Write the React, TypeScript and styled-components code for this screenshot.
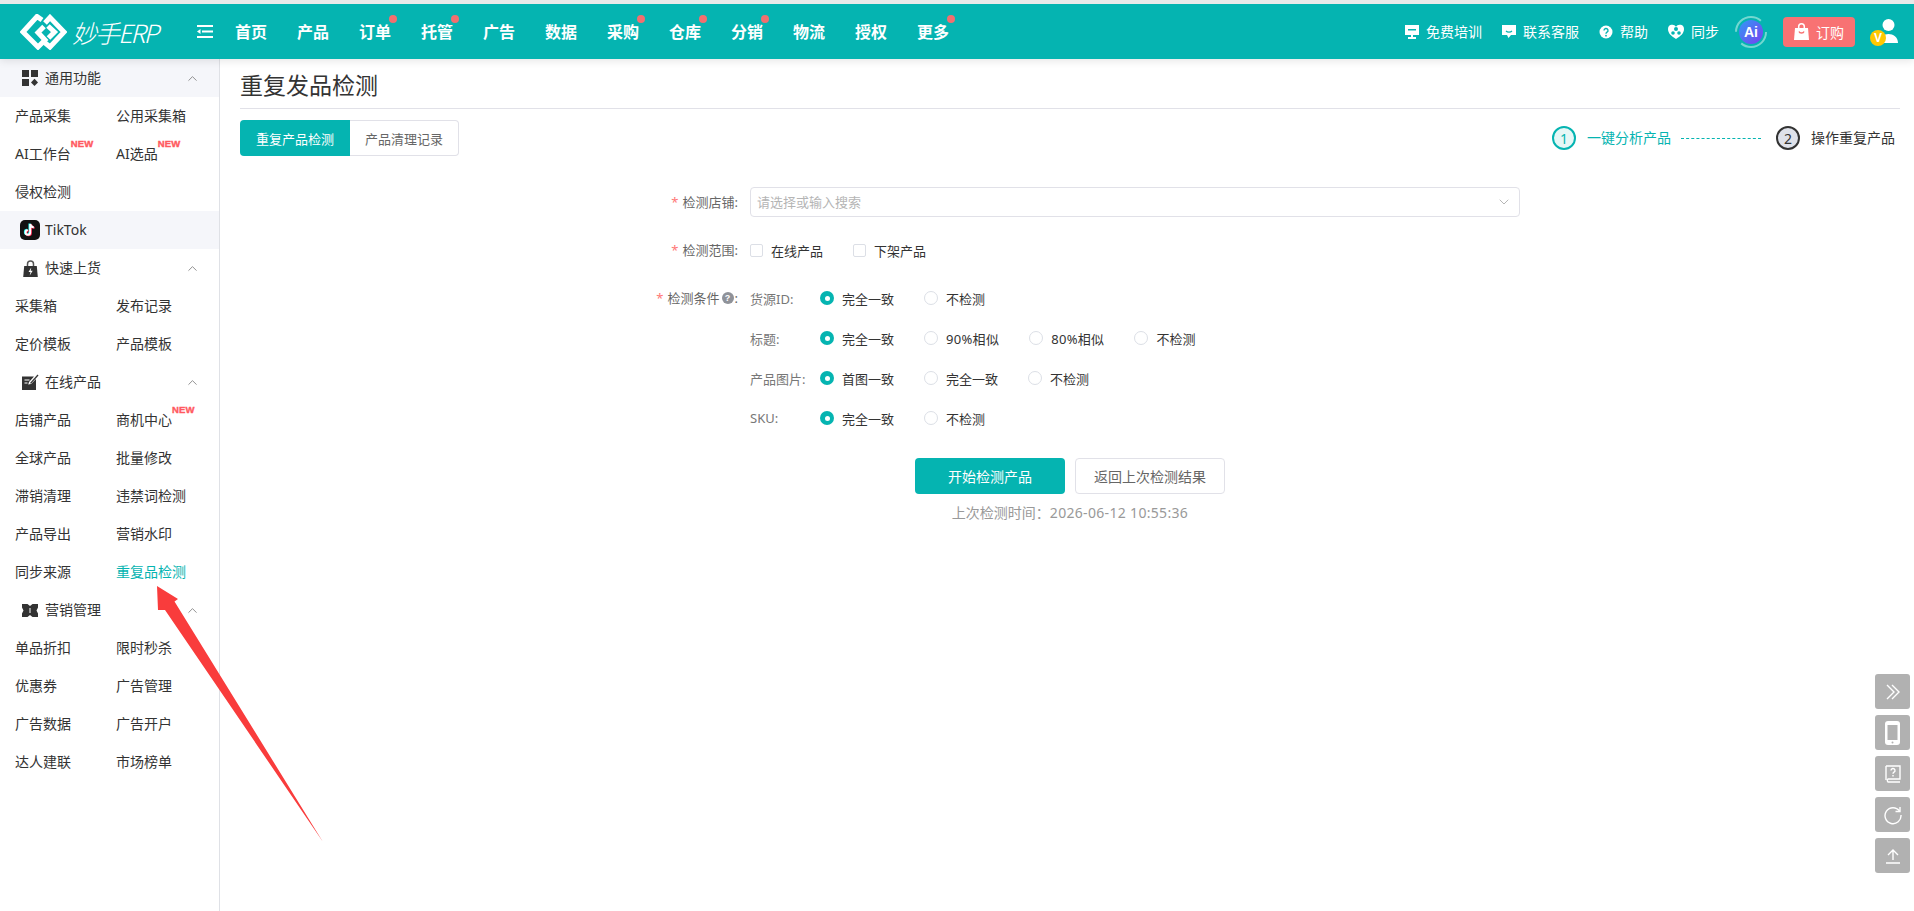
import React from "react";
import styled, { createGlobalStyle } from "styled-components";
import { ChevronDown, ChevronUp } from "lucide-react";

const TEAL = "#05b4b1";

const Global = createGlobalStyle`
  html, body { margin: 0; padding: 0; background: #fff; }
  body { font-family: "Noto Sans", "Noto Sans CJK SC", sans-serif; color: #333; overflow: hidden; }
  * { box-sizing: border-box; }
`;

const Page = styled.div`
  position: relative;
  width: 1914px;
  height: 911px;
  overflow: hidden;
  display: flex;
  flex-direction: column;
  border-top: 4px solid #e9e9e9;
`;

const Header = styled.header`
  position: relative;
  z-index: 2;
  height: 55px;
  flex: none;
  display: flex;
  align-items: center;
  background: ${TEAL};
  color: #fff;
  padding: 0 16px 0 20px;
  box-shadow: 0 2px 8px rgba(0, 0, 0, 0.1);
`;

const Logo = styled.div`
  display: flex;
  align-items: center;
  gap: 5px;
  width: 177px;
  flex: none;
`;

const LogoText = styled.span`
  font-family: "Noto Sans CJK SC", "Noto Sans", sans-serif;
  font-size: 25px;
  font-weight: 300;
  font-style: italic;
  letter-spacing: -2px;
  line-height: 34px;
  white-space: nowrap;
`;

const MenuIcon = styled.svg`
  width: 16px;
  height: 13px;
  flex: none;
  margin-right: 22px;
`;

const Nav = styled.nav`
  display: flex;
  gap: 30px;
`;

const NavItem = styled.span<{ $dot?: boolean }>`
  position: relative;
  font-size: 16px;
  line-height: 24px;
  font-weight: 700;
  width: 32px;
  white-space: nowrap;
  &::after {
    content: "";
    display: ${(p) => (p.$dot ? "block" : "none")};
    position: absolute;
    right: -6px;
    top: -5px;
    width: 8px;
    height: 8px;
    border-radius: 50%;
    background: #f26f6f;
  }
`;

const HeaderRight = styled.div`
  margin-left: auto;
  display: flex;
  align-items: center;
`;

const Tools = styled.div`
  display: flex;
  align-items: center;
  gap: 20px;
  margin-right: 16px;
`;

const Tool = styled.span`
  display: flex;
  align-items: center;
  gap: 7px;
  font-size: 14px;
  line-height: 20px;
  white-space: nowrap;
`;

const AiBall = styled.div`
  position: relative;
  width: 32px;
  height: 32px;
  margin-right: 16px;
  flex: none;
`;

const AiLabel = styled.span`
  position: absolute;
  inset: 0;
  display: flex;
  align-items: center;
  justify-content: center;
  font-family: "Liberation Sans", sans-serif;
  font-size: 14px;
  font-weight: 700;
  color: #fff;
`;

const BuyButton = styled.div`
  width: 72px;
  height: 30px;
  display: flex;
  align-items: center;
  gap: 7px;
  padding-left: 11px;
  margin-right: 15px;
  background: #f87273;
  border-radius: 4px;
  font-size: 14px;
`;

const UserBox = styled.div`
  position: relative;
  width: 28px;
  height: 26px;
  flex: none;
`;

const VBadge = styled.span`
  position: absolute;
  left: 0;
  bottom: -1px;
  width: 16px;
  height: 16px;
  border-radius: 50%;
  background: #ffc800;
  color: #fff;
  font: 700 12px/16px "Liberation Sans", sans-serif;
  text-align: center;
`;

const Body = styled.div`
  flex: 1;
  display: flex;
  min-height: 0;
`;

const Sidebar = styled.aside`
  width: 220px;
  flex: none;
  border-right: 1px solid #dfe1e6;
`;

const SectionHead = styled.div<{ $tint?: boolean }>`
  height: 38px;
  display: flex;
  align-items: center;
  padding: 0 19px 0 20px;
  background: ${(p) => (p.$tint ? "#f5f6fa" : "#fff")};
  font-size: 14px;
  color: #333;
`;

const SectionIcon = styled.span`
  width: 20px;
  height: 20px;
  flex: none;
  display: flex;
  align-items: center;
  justify-content: center;
  margin-right: 5px;
`;

const SectionTitle = styled.span`
  flex: 1;
  line-height: 20px;
`;

const ItemGrid = styled.div`
  display: grid;
  grid-template-columns: 101px 101px;
  grid-auto-rows: 38px;
  padding-left: 15px;
`;

const Item = styled.div<{ $active?: boolean }>`
  display: flex;
  align-items: center;
  font-size: 14px;
  color: ${(p) => (p.$active ? TEAL : "#333")};
  white-space: nowrap;
`;

const ItemLabel = styled.span`
  position: relative;
  line-height: 20px;
`;

const NewTag = styled.span`
  position: absolute;
  left: 100%;
  top: -5px;
  font: 700 9.5px/10px "Liberation Sans", sans-serif;
  letter-spacing: 0.2px;
  color: #ff5a5f;
  -webkit-text-stroke: 0.4px #ff5a5f;
`;

const Main = styled.main`
  flex: 1;
  min-width: 0;
  padding: 0 14px 0 20px;
`;

const Title = styled.h1`
  margin: 0;
  height: 50px;
  display: flex;
  align-items: center;
  font-size: 23px;
  font-weight: 400;
  color: #333;
  border-bottom: 1px solid #e1e1e8;
`;

const TabRow = styled.div`
  margin-top: 11px;
  display: flex;
  justify-content: space-between;
  align-items: center;
`;

const Tabs = styled.div`
  display: flex;
  height: 36px;
`;

const Tab = styled.div<{ $active?: boolean }>`
  width: ${(p) => (p.$active ? "110px" : "109px")};
  display: flex;
  align-items: center;
  justify-content: center;
  font-size: 13px;
  background: ${(p) => (p.$active ? TEAL : "#fff")};
  color: ${(p) => (p.$active ? "#fff" : "#666")};
  border: ${(p) => (p.$active ? "none" : "1px solid #e1e1e8")};
  border-left: none;
  border-radius: ${(p) => (p.$active ? "4px 0 0 4px" : "0 4px 4px 0")};
`;

const Steps = styled.div`
  display: flex;
  align-items: center;
  padding-right: 5px;
  font-size: 14px;
`;

const StepCircle = styled.span<{ $current?: boolean }>`
  width: 24px;
  height: 24px;
  border-radius: 50%;
  display: flex;
  align-items: center;
  justify-content: center;
  font-size: 14px;
  border: 2px solid ${(p) => (p.$current ? TEAL : "#333")};
  background: ${(p) => (p.$current ? "#e6f7f6" : "#dfe2ea")};
  color: ${(p) => (p.$current ? TEAL : "#333")};
  margin-right: 11px;
`;

const StepText = styled.span<{ $current?: boolean }>`
  color: ${(p) => (p.$current ? TEAL : "#333")};
  line-height: 20px;
`;

const StepLine = styled.span`
  width: 80px;
  margin: 0 15px 0 10px;
  border-top: 1px dashed ${TEAL};
`;

const Form = styled.div`
  width: 900px;
  margin: 31px auto 0;
  font-size: 13px;
`;

const FormRow = styled.div<{ $top?: number }>`
  display: grid;
  grid-template-columns: 118px 1fr;
  column-gap: 12px;
  margin-top: ${(p) => p.$top ?? 0}px;
`;

const Label = styled.label`
  display: flex;
  justify-content: flex-end;
  align-items: center;
  height: 20px;
  line-height: 20px;
  color: #666;
  white-space: nowrap;
`;

const SelectLabel = styled(Label)`
  height: 30px;
`;

const Star = styled.span`
  color: #f77;
  margin-right: 4px;
`;

const HelpDot = styled.span`
  width: 12px;
  height: 12px;
  margin-left: 2px;
  margin-right: 1px;
  border-radius: 50%;
  background: #8f9299;
  color: #fff;
  font: 700 9px/12px "Liberation Sans", sans-serif;
  text-align: center;
`;

const Select = styled.div`
  height: 30px;
  display: flex;
  align-items: center;
  justify-content: space-between;
  padding: 0 7px 1px 6px;
  border: 1px solid #e1e1e8;
  border-radius: 4px;
  color: #b5b5b5;
`;

const ChoiceLine = styled.div`
  display: flex;
  align-items: center;
  height: 20px;
`;

const CheckItem = styled.span`
  display: flex;
  align-items: center;
  gap: 8px;
  margin-right: 30px;
  color: #333;
`;

const CheckBox = styled.span`
  width: 13px;
  height: 13px;
  border: 1px solid #dcdfe6;
  border-radius: 2px;
`;

const ConditionStack = styled.div`
  display: flex;
  flex-direction: column;
  gap: 20px;
`;

const RowKey = styled.span`
  width: 70px;
  flex: none;
  color: #777;
  white-space: nowrap;
`;

const RadioItem = styled.span<{ $spaced?: boolean }>`
  display: flex;
  align-items: center;
  gap: 8px;
  margin-right: 30px;
  color: #333;
  white-space: nowrap;
  letter-spacing: ${(p) => (p.$spaced ? "0.3px" : "0")};
`;

const RadioMark = styled.span<{ $on?: boolean }>`
  width: 14px;
  height: 14px;
  border-radius: 50%;
  display: flex;
  align-items: center;
  justify-content: center;
  background: ${(p) => (p.$on ? TEAL : "#fff")};
  border: ${(p) => (p.$on ? "none" : "1px solid #dcdfe6")};
  &::after {
    content: "";
    display: ${(p) => (p.$on ? "block" : "none")};
    width: 5px;
    height: 5px;
    border-radius: 50%;
    background: #fff;
  }
`;

const ActionRow = styled.div`
  margin-top: 30px;
  display: flex;
  justify-content: center;
  gap: 10px;
`;

const ActionButton = styled.div<{ $primary?: boolean }>`
  width: 150px;
  height: 36px;
  display: flex;
  align-items: center;
  justify-content: center;
  font-size: 14px;
  border-radius: 4px;
  background: ${(p) => (p.$primary ? TEAL : "#fff")};
  color: ${(p) => (p.$primary ? "#fff" : "#666")};
  border: ${(p) => (p.$primary ? "none" : "1px solid #e1e1e8")};
`;

const LastCheck = styled.div`
  margin-top: 8px;
  text-align: center;
  font-family: "Noto Sans CJK SC", "Noto Sans", sans-serif;
  font-size: 14px;
  line-height: 20px;
  color: #999;
`;

const LastCheckTime = styled.span`
  font-family: "Noto Sans", sans-serif;
  letter-spacing: 0.32px;
`;

const FloatBar = styled.div`
  position: absolute;
  right: 4px;
  top: 670px;
  display: flex;
  flex-direction: column;
  gap: 6px;
  z-index: 3;
`;

const FloatBtn = styled.div`
  width: 35px;
  height: 35px;
  border-radius: 3px;
  background: #b1b1b1;
  display: flex;
  align-items: center;
  justify-content: center;
`;

const ArrowMark = styled.svg`
  position: absolute;
  left: 150px;
  top: 578px;
  width: 180px;
  height: 270px;
  z-index: 4;
  pointer-events: none;
`;

const LogoMark = () => (
  <svg width="47" height="36" viewBox="0 0 47 36" fill="none" stroke="#fff" strokeWidth="5" strokeLinejoin="miter">
    <path d="M22 6 L17 2.5 L3 18 L18 33 L25 26 L18 18.5 L24 12.5" />
    <path d="M25 9 L30 3.5 L44 18 L30 33 L24 28" />
    <path d="M28 12 L34.5 18 L28.5 24" />
  </svg>
);

const GridIcon = () => (
  <svg width="16" height="16" viewBox="0 0 16 16" fill="#333">
    <rect x="0" y="0" width="7" height="7" />
    <rect x="9" y="0" width="7" height="7" />
    <rect x="0" y="9" width="7" height="7" />
    <path d="M12.5 8.8 L16 12.5 L12.5 16 L9 12.5 Z" />
  </svg>
);

const TikTokIcon = () => (
  <svg width="20" height="20" viewBox="0 0 20 20" style={{ marginLeft: -1 }}>
    <rect width="20" height="20" rx="5" fill="#111" />
    <path d="M10.2 4v8.4a2.3 2.3 0 1 1-2.3-2.3M10.2 4c.3 2 1.6 3.2 3.6 3.4" transform="translate(-0.8 -0.5)" fill="none" stroke="#25f4ee" strokeWidth="1.9" />
    <path d="M10.2 4v8.4a2.3 2.3 0 1 1-2.3-2.3M10.2 4c.3 2 1.6 3.2 3.6 3.4" transform="translate(0.8 0.5)" fill="none" stroke="#fe2c55" strokeWidth="1.9" />
    <path d="M10.2 4v8.4a2.3 2.3 0 1 1-2.3-2.3M10.2 4c.3 2 1.6 3.2 3.6 3.4" fill="none" stroke="#fff" strokeWidth="1.9" />
  </svg>
);

const BoltBagIcon = () => (
  <svg width="15" height="17" viewBox="0 0 15 17">
    <path d="M4.5 6V4a3 3 0 0 1 6 0v2" fill="none" stroke="#555" strokeWidth="1.5" />
    <path d="M1.2 6h12.6l1 11H.2z" fill="#333" />
    <path d="M8.3 7.5 5.5 12h2l-.8 3.4 3-4.6h-2z" fill="#fff" />
  </svg>
);

const NoteIcon = () => (
  <svg width="17" height="16" viewBox="0 0 17 16">
    <path d="M0 2.5h12L7 8l-.8 2.6L9 10l5-5v11H0z" fill="#333" />
    <path d="M8 9 15.5 .5l1 1L9 9.8z" fill="#333" />
    <path d="M2.5 6h5M2.5 9h3" stroke="#fff" strokeWidth="1.2" />
  </svg>
);

const TicketIcon = () => (
  <svg width="16" height="13" viewBox="0 0 16 13">
    <path d="M0 0h5.5L8 2 10.5 0H16v3.5L14.500 6.500 16 9.500V13h-5.500L8 11 5.500 13H0V9.500L1.500 6.500 0 3.500z" fill="#333" />
    <path d="M8 4v5" stroke="#fff" strokeWidth="1" />
  </svg>
);

const BoardIcon = () => (
  <svg width="14" height="16" viewBox="0 0 14 16" fill="#fff">
    <path d="M0 1h14v10H8v2h3v2H3v-2h3v-2H0z" />
    <path d="M3 5h8v1.500H3z" fill={TEAL} />
  </svg>
);

const ChatIcon = () => (
  <svg width="14" height="15" viewBox="0 0 14 15" fill="#fff">
    <path d="M0 1h14v10H9l-2.500 3L5 11H0z" />
    <path d="M4 7c1.500 1.400 4.500 1.400 6 0" stroke={TEAL} strokeWidth="1.2" fill="none" />
  </svg>
);

const HelpIcon = () => (
  <svg width="14" height="14" viewBox="0 0 14 14">
    <circle cx="7" cy="7" r="6.5" fill="#fff" />
    <path d="M5 5.500a2 2 0 1 1 3 1.700c-.7.400-1 .800-1 1.500" stroke={TEAL} strokeWidth="1.4" fill="none" />
    <circle cx="7" cy="10.7" r="0.9" fill={TEAL} />
  </svg>
);

const SyncIcon = () => (
  <svg width="16" height="15" viewBox="0 0 16 15">
    <path d="M8 15C3 12 0 9 0 5a4.300 4.300 0 0 1 8-2.200A4.300 4.300 0 0 1 16 5c0 4-3 7-8 10z" fill="#fff" />
    <circle cx="8" cy="5" r="2" fill={TEAL} />
    <circle cx="5" cy="9" r="1.8" fill={TEAL} />
    <circle cx="11" cy="9" r="1.8" fill={TEAL} />
  </svg>
);

const BagIcon = () => (
  <svg width="15" height="17" viewBox="0 0 15 17">
    <path d="M4.700 6V3.600a2.800 2.800 0 0 1 5.600 0V6" fill="none" stroke="#fff" strokeWidth="1.5" />
    <path d="M1 5h13l1 12H0z" fill="#fff" />
    <path d="M5 8.500c.5 2 4.500 2 5 0" fill="none" stroke="#f87273" strokeWidth="1.3" />
  </svg>
);

const AiRing = () => (
  <svg width="32" height="32" viewBox="0 0 32 32" fill="none">
    <defs>
      <linearGradient id="aiGrad" x1="0" y1="0" x2="1" y2="1">
        <stop offset="0" stopColor="#2f9bf5" />
        <stop offset="1" stopColor="#7a3ff0" />
      </linearGradient>
    </defs>
    <circle cx="16" cy="16" r="15" stroke="#7fdcd4" strokeWidth="2" strokeDasharray="34 13" opacity="0.9" />
    <circle cx="16" cy="16" r="12" fill="url(#aiGrad)" />
  </svg>
);

const PersonIcon = () => (
  <svg width="28" height="26" viewBox="0 0 28 26" fill="#fff">
    <circle cx="18.5" cy="6" r="6" />
    <path d="M10 24c0-6 4-9 8.500-9S28 18 28 24z" />
  </svg>
);

const iconStroke = { fill: "none", stroke: "#fff", strokeWidth: 1.4 } as const;

const FloatIcons = [
  <svg key="a" width="20" height="20" viewBox="0 0 20 20" {...iconStroke}>
    <path d="M4 3l7 7-7 7M9 3l7 7-7 7" />
  </svg>,
  <svg key="b" width="16" height="24" viewBox="0 0 16 24">
    <rect width="15" height="24" rx="3" fill="#fff" />
    <rect x="2.5" y="4" width="10" height="15" fill="#b1b1b1" />
    <circle cx="7.5" cy="21.5" r="1" fill="#b1b1b1" />
  </svg>,
  <svg key="c" width="18" height="18" viewBox="0 0 18 18" {...iconStroke}>
    <path d="M2 1h14v13H4a2 2 0 0 0 0 3h12M2 15V1" />
    <path d="M7 5.500a2 2 0 1 1 3 1.700c-.7.400-1 .800-1 1.500M9 10v1.500" />
  </svg>,
  <svg key="d" width="20" height="20" viewBox="0 0 20 20" {...iconStroke}>
    <path d="M16.500 6A8 8 0 1 0 18 10" />
    <path d="M17 2v4.500h-4.500" />
  </svg>,
  <svg key="e" width="18" height="18" viewBox="0 0 18 18" {...iconStroke}>
    <path d="M9 13V3M4 8l5-5 5 5M2 16h14" />
  </svg>,
];

type SideItem = { label: string; isNew?: boolean; active?: boolean };
type SideSection = { title: string; icon: React.ReactNode; tint?: boolean; chevron?: boolean; items: SideItem[] };

const l = (label: string, isNew?: boolean, active?: boolean): SideItem => ({ label, isNew, active });

const sections: SideSection[] = [
  {
    title: "通用功能",
    icon: <GridIcon />,
    tint: true,
    chevron: true,
    items: [l("产品采集"), l("公用采集箱"), l("AI工作台", true), l("AI选品", true), l("侵权检测")],
  },
  { title: "TikTok", icon: <TikTokIcon />, tint: true, items: [] },
  {
    title: "快速上货",
    icon: <BoltBagIcon />,
    chevron: true,
    items: [l("采集箱"), l("发布记录"), l("定价模板"), l("产品模板")],
  },
  {
    title: "在线产品",
    icon: <NoteIcon />,
    chevron: true,
    items: [
      l("店铺产品"),
      l("商机中心", true),
      l("全球产品"),
      l("批量修改"),
      l("滞销清理"),
      l("违禁词检测"),
      l("产品导出"),
      l("营销水印"),
      l("同步来源"),
      l("重复品检测", false, true),
    ],
  },
  {
    title: "营销管理",
    icon: <TicketIcon />,
    chevron: true,
    items: [
      l("单品折扣"),
      l("限时秒杀"),
      l("优惠券"),
      l("广告管理"),
      l("广告数据"),
      l("广告开户"),
      l("达人建联"),
      l("市场榜单"),
    ],
  },
];

const navItems: [string, boolean][] = [
  ["首页", false],
  ["产品", false],
  ["订单", true],
  ["托管", true],
  ["广告", false],
  ["数据", false],
  ["采购", true],
  ["仓库", true],
  ["分销", true],
  ["物流", false],
  ["授权", false],
  ["更多", true],
];

const conditions: { key: string; options: string[] }[] = [
  { key: "货源ID:", options: ["完全一致", "不检测"] },
  { key: "标题:", options: ["完全一致", "90%相似", "80%相似", "不检测"] },
  { key: "产品图片:", options: ["首图一致", "完全一致", "不检测"] },
  { key: "SKU:", options: ["完全一致", "不检测"] },
];

export default function App() {
  return (
    <Page>
      <Global />
      <Header>
        <Logo>
          <LogoMark />
          <LogoText>妙手ERP</LogoText>
        </Logo>
        <MenuIcon viewBox="0 0 16 13" fill="#fff">
          <rect x="0" y="0" width="16" height="2" />
          <rect x="5" y="5.5" width="11" height="2" />
          <rect x="0" y="11" width="16" height="2" />
          <path d="M0 6.500 3.500 4v5z" />
        </MenuIcon>
        <Nav>
          {navItems.map(([name, dot]) => (
            <NavItem key={name} $dot={dot}>
              {name}
            </NavItem>
          ))}
        </Nav>
        <HeaderRight>
          <Tools>
            <Tool>
              <BoardIcon />
              免费培训
            </Tool>
            <Tool>
              <ChatIcon />
              联系客服
            </Tool>
            <Tool>
              <HelpIcon />
              帮助
            </Tool>
            <Tool>
              <SyncIcon />
              同步
            </Tool>
          </Tools>
          <AiBall>
            <AiRing />
            <AiLabel>Ai</AiLabel>
          </AiBall>
          <BuyButton>
            <BagIcon />
            订购
          </BuyButton>
          <UserBox>
            <PersonIcon />
            <VBadge>V</VBadge>
          </UserBox>
        </HeaderRight>
      </Header>
      <Body>
        <Sidebar>
          {sections.map((s) => (
            <div key={s.title}>
              <SectionHead $tint={s.tint}>
                <SectionIcon>{s.icon}</SectionIcon>
                <SectionTitle>{s.title}</SectionTitle>
                {s.chevron && <ChevronUp size={15} color="#777" strokeWidth={1.3} />}
              </SectionHead>
              {s.items.length > 0 && (
                <ItemGrid>
                  {s.items.map((it) => (
                    <Item key={it.label} $active={it.active}>
                      <ItemLabel>
                        {it.label}
                        {it.isNew && <NewTag>NEW</NewTag>}
                      </ItemLabel>
                    </Item>
                  ))}
                </ItemGrid>
              )}
            </div>
          ))}
        </Sidebar>
        <Main>
          <Title>重复发品检测</Title>
          <TabRow>
            <Tabs>
              <Tab $active>重复产品检测</Tab>
              <Tab>产品清理记录</Tab>
            </Tabs>
            <Steps>
              <StepCircle $current>1</StepCircle>
              <StepText $current>一键分析产品</StepText>
              <StepLine />
              <StepCircle>2</StepCircle>
              <StepText>操作重复产品</StepText>
            </Steps>
          </TabRow>
          <Form>
            <FormRow>
              <SelectLabel>
                <Star>*</Star>检测店铺:
              </SelectLabel>
              <Select>
                请选择或输入搜索
                <ChevronDown size={16} color="#aaa" strokeWidth={1.3} />
              </Select>
            </FormRow>
            <FormRow $top={23}>
              <Label>
                <Star>*</Star>检测范围:
              </Label>
              <ChoiceLine>
                <CheckItem>
                  <CheckBox />
                  在线产品
                </CheckItem>
                <CheckItem>
                  <CheckBox />
                  下架产品
                </CheckItem>
              </ChoiceLine>
            </FormRow>
            <FormRow $top={28}>
              <Label>
                <Star>*</Star>检测条件
                <HelpDot>?</HelpDot>:
              </Label>
              <ConditionStack>
                {conditions.map((c) => (
                  <ChoiceLine key={c.key}>
                    <RowKey>{c.key}</RowKey>
                    {c.options.map((o, i) => (
                      <RadioItem key={o} $spaced={o.includes("%")}>
                        <RadioMark $on={i === 0} />
                        {o}
                      </RadioItem>
                    ))}
                  </ChoiceLine>
                ))}
              </ConditionStack>
            </FormRow>
          </Form>
          <ActionRow>
            <ActionButton $primary>开始检测产品</ActionButton>
            <ActionButton>返回上次检测结果</ActionButton>
          </ActionRow>
          <LastCheck>
            上次检测时间：<LastCheckTime>2026-06-12 10:55:36</LastCheckTime>
          </LastCheck>
        </Main>
      </Body>
      <FloatBar>
        {FloatIcons.map((icon, i) => (
          <FloatBtn key={i}>{icon}</FloatBtn>
        ))}
      </FloatBar>
      <ArrowMark viewBox="0 0 180 270">
        <path d="M7 4 L28 17 L24.5 19.5 L173 260 L15 28 L8 28 Z" fill="#f93c3c" />
      </ArrowMark>
    </Page>
  );
}
